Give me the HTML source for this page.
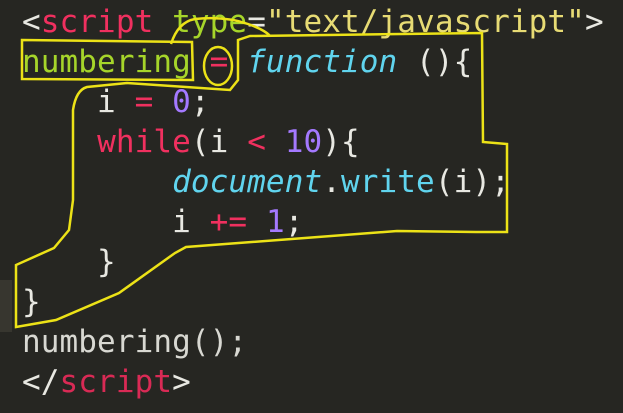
<!DOCTYPE html>
<html><head><meta charset="utf-8"><style>
html,body{margin:0;padding:0;background:#262622;width:623px;height:413px;overflow:hidden}
.bar{position:absolute;left:0;top:280px;width:12px;height:52px;background:#37362f}
pre{position:absolute;left:22px;top:0;margin:0;font-family:"DejaVu Sans Mono","Liberation Mono",monospace;font-size:31px;line-height:40px;color:#e8e8e2;white-space:pre;letter-spacing:0.1px}
.r{color:#f0305f}.g{color:#a6d52a}.y{color:#e7db74}.c{color:#60d4ee;font-style:italic}.cb{color:#60d4ee}.p{color:#a479ff}.d{color:#d92a55}
svg{position:absolute;left:0;top:0}
</style></head><body>
<div class="bar"></div>
<pre style="top:2px">&lt;<span class="r">script</span> <span class="g">type</span>=<span class="y">"text/javascript"</span>&gt;
<span class="g">numbering</span> <span class="r">=</span> <span class="c">function</span> (){
    i <span class="r">=</span> <span class="p">0</span>;
    <span class="r">while</span>(i <span class="r">&lt;</span> <span class="p">10</span>){
        <span class="c">document</span>.<span class="cb">write</span>(i);
        i <span class="r">+=</span> <span class="p">1</span>;
    }
}
<span style="color:#d8d8d2">numbering();</span>
&lt;/<span class="d">script</span>&gt;</pre>
<svg width="623" height="413" fill="none" stroke="#ece217" stroke-width="2.5">
<path d="M22 40 L192 42 L193 80 L22 79 Z"/>
<ellipse cx="218" cy="66" rx="14" ry="19"/>
<path d="M171 44 Q178 22 195 19 Q225 16 248 24 Q265 30 270 36"/>
<path d="M238 80 L238 40 L250 36 L482 33 L483 142 L507 144 L507 232 L476 232 L397 231 L186 247 L175 253 L119 293 L56 320 L16 327 L16 265 L54 248 L69 230 L73 200 L73 110 Q76 90 87 87 L127 83 L230 90 Z"/>
</svg>
</body></html>
